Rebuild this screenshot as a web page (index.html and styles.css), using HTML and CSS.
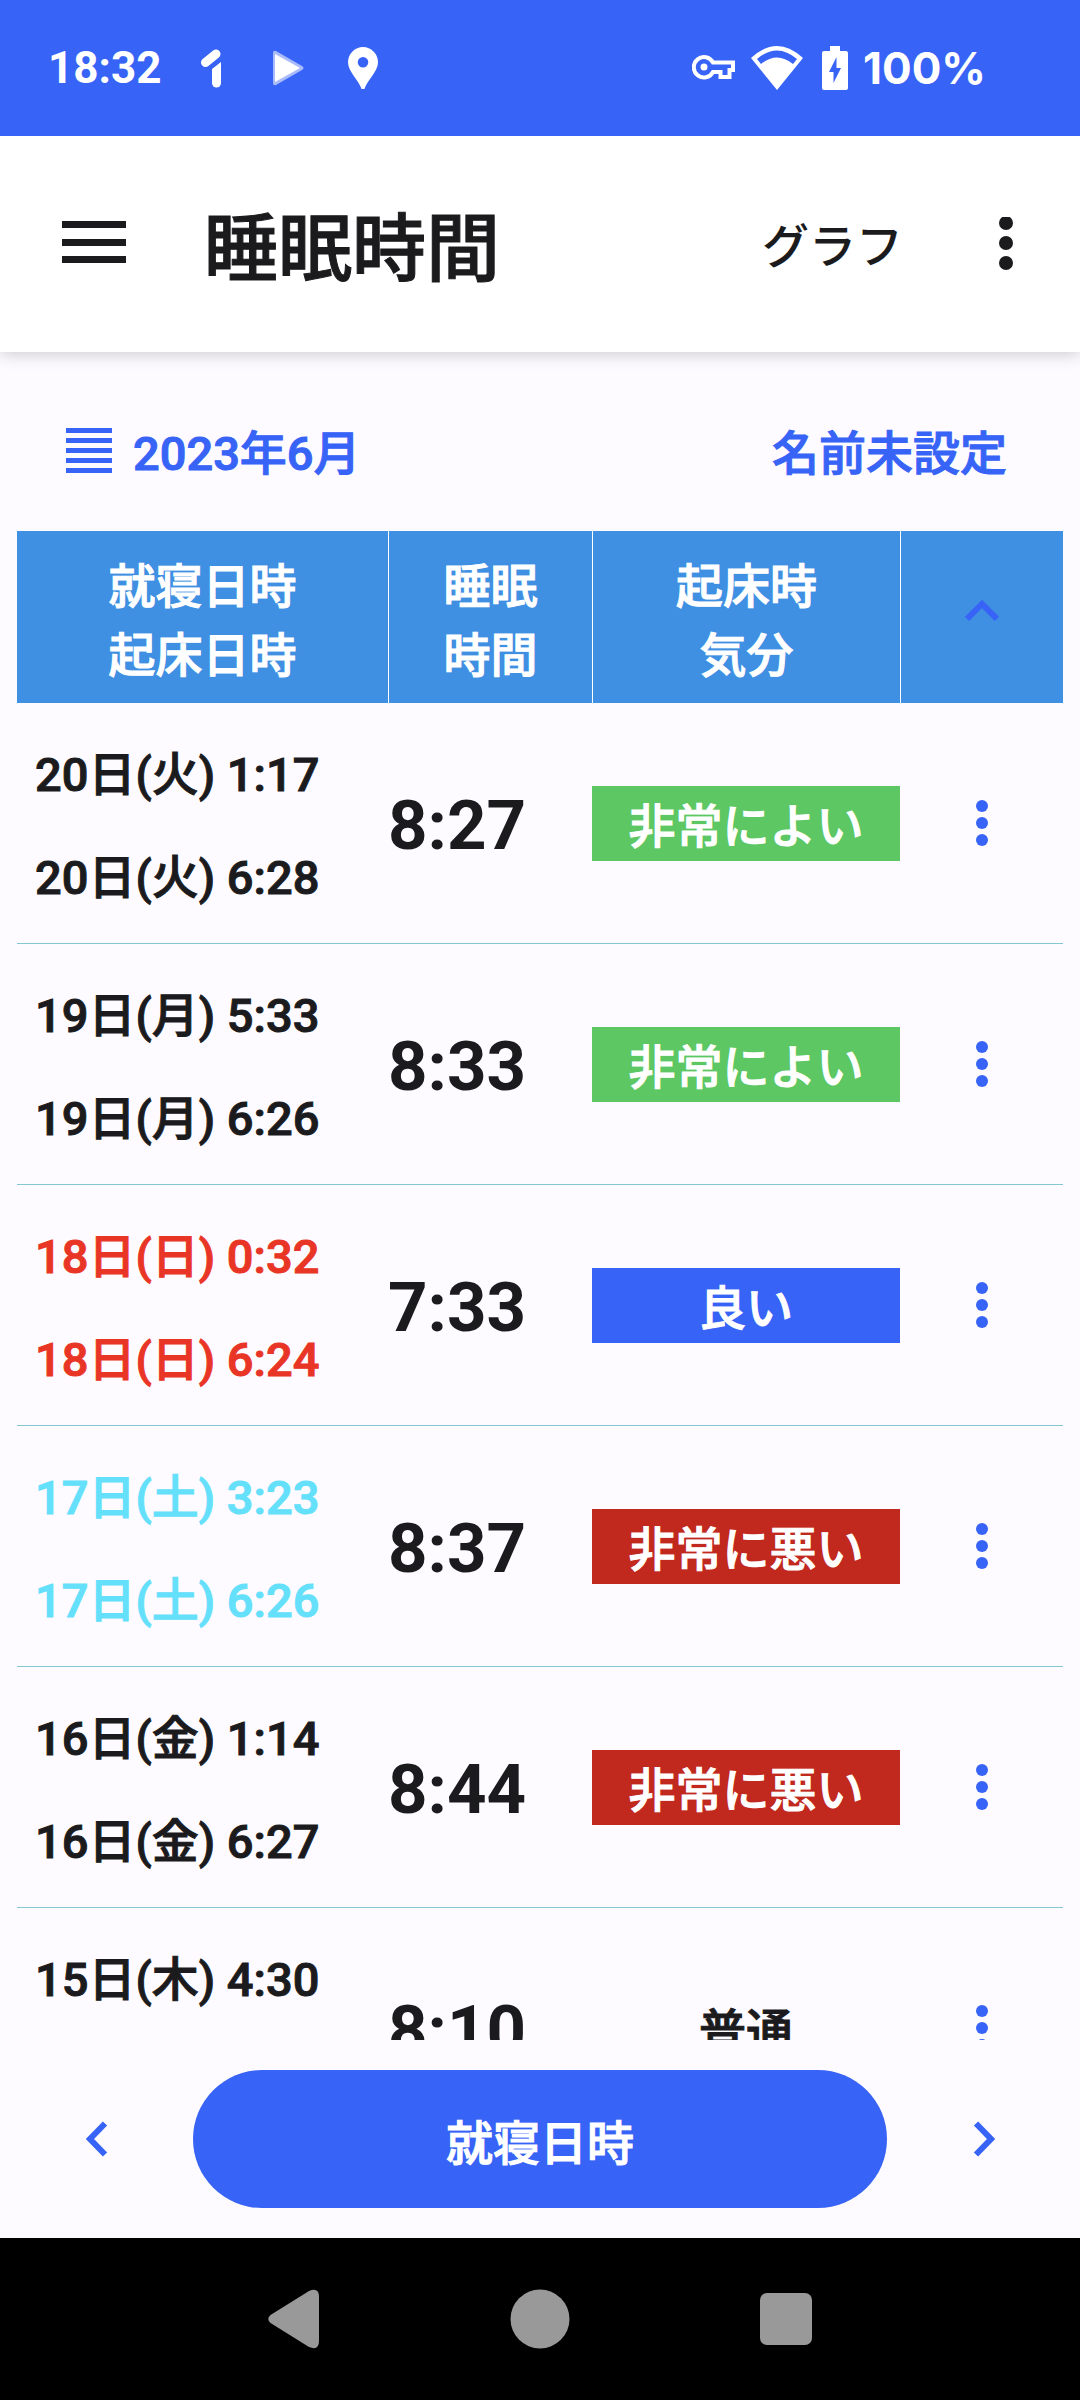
FILE: index.html
```html
<!DOCTYPE html>
<html lang="ja">
<head>
<meta charset="utf-8">
<meta name="viewport" content="width=device-width, initial-scale=1">
<title>睡眠時間</title>
<link rel="stylesheet" href="styles.css">
</head>
<body>
<svg class="defs" width="0" height="0" aria-hidden="true">
  <symbol id="dots" viewBox="0 0 14 48"><circle cx="7" cy="7" r="6"/><circle cx="7" cy="24" r="6"/><circle cx="7" cy="41" r="6"/></symbol>
</svg>
<div class="screen">
  <div class="statusbar">
    <div class="status-left">
      <span class="clock">18:32</span>
      <svg class="icon-one" width="20" height="40" viewBox="0 0 20 40"><path d="M4.500 14.500 15 6" stroke="#fff" stroke-width="9" stroke-linecap="round"/><path d="M11 21 20 14V35a4.500 4.500 0 0 1-9 0Z" fill="#fff"/></svg>
      <svg class="icon-play" width="32" height="36" viewBox="0 0 32 36"><path d="M0 3Q0 0 3 1L29 16Q32 18 29 20L3 35Q0 36 0 33Z" fill="#a9bbfb"/><path d="M2 4 27 18 2 32Z" fill="#fff"/></svg>
      <svg class="icon-pin" width="32" height="44" viewBox="0 0 32 44"><path fill="#fff" fill-rule="evenodd" d="M16 1A15.200 15.200 0 0 1 31 16C31 26 20 34 17.500 43h-3C12 34 1 26 1 16A15.200 15.200 0 0 1 16 1Zm0 10a5.300 5.300 0 1 0 0 10.600 5.300 5.300 0 0 0 0-10.600Z"/></svg>
    </div>
    <div class="status-right">
      <svg width="44" height="28" viewBox="0 0 44 28" fill="none" stroke="#fff" stroke-width="4"><path d="M21 8.500H41V16H37.500V23H28.500V18H21A10.200 10.200 0 1 1 21 8.500Z"/><circle cx="12" cy="13" r="3.500" fill="#fff" stroke="none"/></svg>
      <svg width="52" height="44" viewBox="0 0 52 44"><path fill="#fff" fill-rule="evenodd" d="M0 12Q26-12 52 12L26 44ZM6 13 10 18Q26 5 42 18L46 13Q26-4 6 13Z"/></svg>
      <svg class="icon-battery" width="26" height="44" viewBox="0 0 26 44"><path fill="#fff" fill-rule="evenodd" d="M8 0H18V5H24Q26 5 26 7V42Q26 44 24 44H2Q0 44 0 42V7Q0 5 2 5H8ZM14.500 11 7 26H11.500V37L19 22H14.500Z"/></svg>
      <span class="level">100%</span>
    </div>
  </div>

  <header class="appbar">
    <button class="icon-button menu" aria-label="メニュー"><svg width="64" height="46" viewBox="0 0 64 46"><path d="M0 0H64V7H0ZM0 18H64V25H0ZM0 35H64V42H0Z"/></svg></button>
    <h1 class="title">睡眠時間</h1>
    <button class="graph">グラフ</button>
    <button class="icon-button overflow" aria-label="その他"><svg width="14" height="54" viewBox="0 0 14 54"><circle cx="7" cy="6" r="7"/><circle cx="7" cy="26" r="7"/><circle cx="7" cy="46" r="7"/></svg></button>
  </header>

  <main class="content">
    <div class="filters">
      <button class="filter"><svg width="46" height="46" viewBox="0 0 46 46"><path d="M0 0H46V5H0ZM0 10H46V15H0ZM0 20H46V25H0ZM0 30H46V35H0ZM0 40H46V45H0Z"/></svg><span class="filter-text">2023年6月</span></button>
      <button class="filter"><span class="filter-text">名前未設定</span></button>
    </div>

    <div class="list">
      <table class="records">
        <colgroup><col class="col-date"><col class="col-length"><col class="col-mood"><col class="col-more"></colgroup>
        <thead>
          <tr>
            <th>就寝日時<br>起床日時</th>
            <th>睡眠<br>時間</th>
            <th>起床時<br>気分</th>
            <th class="sort"><button class="icon-button" aria-label="並べ替え"><svg width="34" height="22" viewBox="0 0 34 22" fill="none" stroke="#3763f6" stroke-width="6"><path d="M2 19 17 4 32 19"/></svg></button></th>
          </tr>
        </thead>
        <tbody>
          <tr>
            <td class="dates"><div>20日(火) 1:17</div><div>20日(火) 6:28</div></td>
            <td class="length">8:27</td>
            <td class="mood"><div class="badge great">非常によい</div></td>
            <td class="more"><button class="icon-button" aria-label="操作"><svg width="14" height="48"><use href="#dots"/></svg></button></td>
          </tr>
          <tr>
            <td class="dates"><div>19日(月) 5:33</div><div>19日(月) 6:26</div></td>
            <td class="length">8:33</td>
            <td class="mood"><div class="badge great">非常によい</div></td>
            <td class="more"><button class="icon-button" aria-label="操作"><svg width="14" height="48"><use href="#dots"/></svg></button></td>
          </tr>
          <tr>
            <td class="dates sunday"><div>18日(日) 0:32</div><div>18日(日) 6:24</div></td>
            <td class="length">7:33</td>
            <td class="mood"><div class="badge good">良い</div></td>
            <td class="more"><button class="icon-button" aria-label="操作"><svg width="14" height="48"><use href="#dots"/></svg></button></td>
          </tr>
          <tr>
            <td class="dates saturday"><div>17日(土) 3:23</div><div>17日(土) 6:26</div></td>
            <td class="length">8:37</td>
            <td class="mood"><div class="badge awful">非常に悪い</div></td>
            <td class="more"><button class="icon-button" aria-label="操作"><svg width="14" height="48"><use href="#dots"/></svg></button></td>
          </tr>
          <tr>
            <td class="dates"><div>16日(金) 1:14</div><div>16日(金) 6:27</div></td>
            <td class="length">8:44</td>
            <td class="mood"><div class="badge awful">非常に悪い</div></td>
            <td class="more"><button class="icon-button" aria-label="操作"><svg width="14" height="48"><use href="#dots"/></svg></button></td>
          </tr>
          <tr>
            <td class="dates"><div>15日(木) 4:30</div><div>&nbsp;</div></td>
            <td class="length">8:10</td>
            <td class="mood"><div class="badge">普通</div></td>
            <td class="more"><button class="icon-button" aria-label="操作"><svg width="14" height="48"><use href="#dots"/></svg></button></td>
          </tr>
        </tbody>
      </table>
    </div>

    <div class="actions">
      <button class="icon-button" aria-label="前の月"><svg width="22" height="36" viewBox="0 0 22 36" fill="none" stroke="#3763f6" stroke-width="6"><path d="M19 2.500 4 18 19 33.500"/></svg></button>
      <button class="primary">就寝日時</button>
      <button class="icon-button" aria-label="次の月"><svg width="22" height="36" viewBox="0 0 22 36" fill="none" stroke="#3763f6" stroke-width="6"><path d="M3 2.500 18 18 3 33.500"/></svg></button>
    </div>
  </main>

  <nav class="navbar">
    <button class="icon-button" aria-label="戻る"><svg width="52" height="60" viewBox="0 0 52 60" fill="#999"><path d="M2.500 26 41 2Q51-2 51 8V52Q51 62 41 58L2.500 34Q-2 30 2.500 26Z"/></svg></button>
    <button class="icon-button" aria-label="ホーム"><svg width="60" height="60" viewBox="0 0 60 60" fill="#999"><circle cx="30" cy="30" r="29.500"/></svg></button>
    <button class="icon-button" aria-label="履歴"><svg width="52" height="52" viewBox="0 0 52 52" fill="#999"><rect width="52" height="52" rx="7"/></svg></button>
  </nav>
</div>
</body>
</html>
```
FILE: styles.css
```css
* { box-sizing: border-box; }

body {
  margin: 0;
  background: #fdfbff;
  color: #1b1b1e;
  font-family: Roboto, "Noto Sans CJK JP", sans-serif;
}

button {
  margin: 0;
  padding: 0;
  border: 0;
  background: none;
  color: inherit;
  font: inherit;
}

svg { display: block; }
.defs { position: absolute; }

.screen {
  display: flex;
  flex-direction: column;
  height: 100vh;
}

.statusbar {
  position: relative;
  z-index: 1;
  display: flex;
  justify-content: space-between;
  align-items: center;
  flex: none;
  height: 136px;
  padding: 0 94px 0 48px;
  background: #3763f6;
  color: #fff;
}

.status-left, .status-right { display: flex; align-items: center; }
.status-right { gap: 15px; }
.clock, .level { font-size: 44px; font-weight: 700; line-height: 56px; }
.level { font-family: Inter, Roboto, sans-serif; }
.icon-one { margin-left: 40px; }
.icon-play { margin-left: 52px; }
.icon-pin { margin-left: 42px; }
.icon-battery { margin-left: 4px; }

.icon-button {
  display: flex;
  justify-content: center;
  align-items: center;
  fill: currentColor;
}

.appbar {
  position: relative;
  display: flex;
  align-items: center;
  flex: none;
  height: 216px;
  padding: 0 67px 0 62px;
  background: #fff;
  box-shadow: 0 2px 16px rgba(0, 0, 0, .2);
}

/* Medium glyphs with a thin outline give the emboldened look of the system font. */
.title, .filter, th, .dates, .badge, .primary { -webkit-text-stroke: 1px currentColor; }

.title {
  flex: 1;
  margin: 0 0 0 78px;
  padding-top: 12px;
  font-size: 74px;
  font-weight: 500;
  line-height: 108px;
}

.graph { padding-top: 6px; font-size: 47px; font-weight: 500; line-height: 72px; }
.overflow { margin-left: 96px; }

.content {
  display: flex;
  flex-direction: column;
  flex: 1;
  min-height: 0;
}

.filters {
  display: flex;
  justify-content: space-between;
  align-items: center;
  flex: none;
  height: 179px;
  padding: 18px 73px 0 66px;
  color: #3763f6;
}

.filter {
  display: flex;
  align-items: center;
  gap: 21px;
  font-size: 47px;
  font-weight: 500;
  line-height: 68px;
  fill: currentColor;
}
.filter-text { padding-top: 6px; }

.list {
  flex: 1;
  min-height: 0;
  margin: 0 17px;
  overflow: hidden;
}

.records {
  width: 100%;
  border-collapse: separate;
  border-spacing: 0;
  table-layout: fixed;
}
.col-date { width: 371px; }
.col-length { width: 204px; }
.col-more { width: 163px; }

th {
  height: 172px;
  padding: 8px 0 0;
  background: #3f8fe2;
  color: #fff;
  font-size: 47px;
  font-weight: 500;
  line-height: 69px;
}
th + th { border-left: 1px solid #fff; }
.sort { padding: 0 0 12px; }
.sort .icon-button { width: 100%; height: 80px; }

td {
  height: 241px;
  padding: 0;
  border-bottom: 1px solid #82c8d2;
}

.dates {
  padding: 6px 0 0 18px;
  font-size: 47px;
  font-weight: 500;
  line-height: 103px;
  white-space: nowrap;
}
.sunday { color: #e93526; }
.saturday { color: #64e0fb; }
.length { padding-top: 4px; font-size: 69px; font-weight: 700; }

.badge {
  height: 75px;
  padding-top: 4px;
  font-size: 47px;
  font-weight: 500;
  line-height: 73px;
  text-align: center;
}
.great { background: #5cc763; color: #fff; }
.good { background: #3763f6; color: #fff; }
.awful { background: #c1281e; color: #fff; }

.more { color: #3763f6; }
.more .icon-button { width: 100%; }

.actions {
  display: grid;
  grid-template-columns: 193px 1fr 193px;
  flex: none;
  padding: 30px 0;
  color: #3763f6;
}

.primary {
  height: 138px;
  border-radius: 69px;
  background: #3763f6;
  color: #fff;
  font-size: 47px;
  font-weight: 500;
}

.navbar {
  display: flex;
  justify-content: center;
  align-items: center;
  gap: 190px;
  flex: none;
  height: 162px;
  background: #000;
}
```
